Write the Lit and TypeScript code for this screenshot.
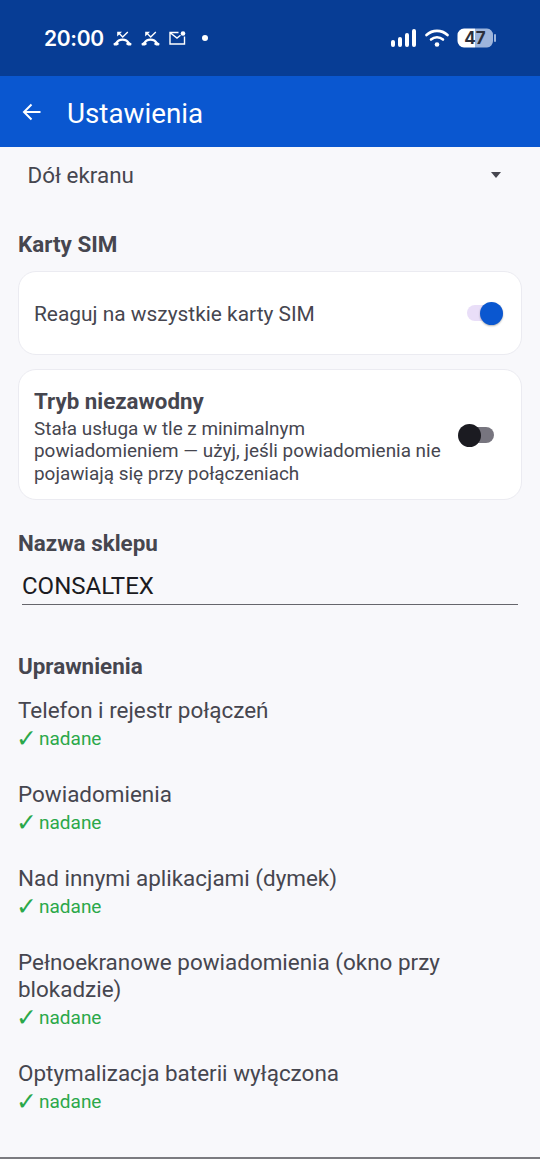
import { LitElement, html, css, svg } from "lit";
import { customElement } from "lit/decorators.js";

const hangup = svg`<path d="M3 12.500C4.500 9.800 7 8.600 9.500 8.600s5 1.200 6.500 3.900" fill="none" stroke="#fff" stroke-width="2.200"/><path d="M.6 12.200 4.800 10.400l1.100 2.900-2 1.300H1.800c-.7 0-1.200-.5-1.200-1.200zM18.400 12.200l-4.200-1.800-1.100 2.900 2 1.300h2.100c.7 0 1.200-.5 1.200-1.200z" fill="#fff"/><path d="M14.800 1 9.700 6 6 2.300" fill="none" stroke="#fff" stroke-width="1.400"/><path d="M4.200 .8H9L4.200 5.600z" fill="#fff"/>`;

@customElement("app-root")
export class AppRoot extends LitElement {
  static styles = css`
    :host { display: block; width: 540px; height: 1159px; overflow: hidden; background: #f8f8fb; font-family: Roboto, "Noto Sans", sans-serif; color: #46464f; }
    .page { height: 1159px; display: flex; flex-direction: column; box-sizing: border-box; border-bottom: 2px solid #7b7b80; }
    .status { height: 76px; flex: none; background: #073d95; display: flex; align-items: center; padding: 0 44px; box-sizing: border-box; color: #fff; justify-content: space-between; }
    .status-left, .status-right { display: flex; align-items: center; }
    .time { font-family: Inter, Roboto, sans-serif; font-weight: 600; font-size: 21px; letter-spacing: -0.3px; margin-right: 9px; }
    .ic { display: block; flex: none; }
    .hang { margin-right: 9px; }
    .mail { margin-right: 16px; }
    .dot { width: 6.500px; height: 6.500px; border-radius: 50%; background: #fff; }
    .wifi { margin: 0 8px 0 9px; }
    .bar { height: 71px; flex: none; background: #0a57d0; display: flex; align-items: center; padding-left: 22px; gap: 25px; color: #fff; font-size: 27.800px; }
    .bar span { padding-top: 3px; }
    .content { flex: 1; padding: 0 18px; display: flex; flex-direction: column; min-height: 0; }
    .select { height: 56px; display: flex; align-items: center; justify-content: space-between; padding: 0 21px 1px 9.500px; box-sizing: border-box; font-size: 22.400px; flex: none; }
    .caret { width: 0; height: 0; border-left: 5.500px solid transparent; border-right: 5.500px solid transparent; border-top: 6px solid #46464f; }
    h2 { margin: 0; font-size: 22.400px; font-weight: 700; line-height: 28px; color: #46464f; }
    .sim-title { margin-top: 27px; }
    .card { background: #fff; border: 1px solid #ebebf1; border-radius: 18px; box-sizing: border-box; display: flex; align-items: center; justify-content: space-between; padding: 0 15px; flex: none; }
    .card1 { height: 84px; margin-top: 13px; font-size: 20.900px; }
    .card1 > span:first-child { padding-top: 2px; }
    .card2 { height: 131px; margin-top: 14px; }
    .card2 .left { margin-top: 3px; }
    .card2 b { display: block; font-size: 22.300px; line-height: 28px; }
    .desc { font-size: 18.900px; line-height: 22.400px; width: 415px; margin-top: 3px; }
    .sw { position: relative; height: 16px; border-radius: 8px; flex: none; }
    .sw i { position: absolute; width: 23px; height: 23px; border-radius: 50%; }
    .on { width: 36px; background: #e9def8; margin-right: 3px; }
    .on i { right: 0; top: -3px; background: #0a57d0; box-shadow: 0 1px 2px rgba(0,0,0,.3); }
    .off { width: 34px; background: #77757f; margin-right: 12px; }
    .off i { left: -2px; top: -3px; background: #1b1b21; }
    .name { margin-top: 29px; }
    .input { margin: 14px 4px 0; height: 33px; border-bottom: 1.500px solid #66666c; font-size: 24px; line-height: 30px; color: #1b1b21; flex: none; }
    .perm-title { margin-top: 47px; }
    .perm { margin-bottom: 28px; flex: none; }
    .perm-title + .perm { margin-top: 17px; }
    .perm .t { font-size: 22.450px; line-height: 27px; }
    .perm .s { font-size: 19px; line-height: 29px; color: #2ba84a; display: flex; align-items: center; }
    .perm .s em { font-style: normal; font-weight: 700; font-family: "DejaVu Sans", sans-serif; font-size: 25px; width: 21px; flex: none; line-height: 29px; margin-left: -2px; margin-right: 2px; }
  `;

  private perm(t: string) {
    return html`<div class="perm"><div class="t">${t}</div><div class="s"><em>✓</em><span>nadane</span></div></div>`;
  }

  render() {
    return html`<div class="page">
      <div class="status">
        <div class="status-left">
          <span class="time">20:00</span>
          <svg class="ic hang" width="19" height="15" viewBox="0 0 19 15">${hangup}</svg>
          <svg class="ic hang" width="19" height="15" viewBox="0 0 19 15">${hangup}</svg>
          <svg class="ic mail" width="17" height="14" viewBox="0 0 17 14"><path d="M9.500 1.500H1v11.500h14.500V5.500M1.500 2l6.500 5 3.500-2.700" fill="none" stroke="#fff" stroke-width="1.400"/><circle cx="14" cy="2.500" r="2.300" fill="#fff"/></svg>
          <span class="dot"></span>
        </div>
        <div class="status-right">
          <svg class="ic" width="25" height="18" viewBox="0 0 25 18"><g fill="#fff"><rect x="0" y="11" width="4" height="7" rx="2"/><rect x="7" y="8" width="4" height="10" rx="2"/><rect x="14" y="4" width="4" height="14" rx="2"/><rect x="21" y="0" width="4" height="18" rx="2"/></g></svg>
          <svg class="ic wifi" width="24" height="18" viewBox="0 0 24 18"><g fill="none" stroke="#fff" stroke-width="2.600" stroke-linecap="round"><path d="M1.500 6C7.500 .5 16.500 .5 22.500 6"/><path d="M6 10.500c3.500-3 8.500-3 12 0"/></g><circle cx="12" cy="15.500" r="2.300" fill="#fff"/></svg>
          <svg class="ic" width="39" height="20" viewBox="0 0 39 20"><path d="M7 .5h11V19.500H7A6.500 6.500 0 0 1 .5 13V7A6.500 6.500 0 0 1 7 .5z" fill="#fff"/><path d="M18 .5h12A6.500 6.500 0 0 1 36 7v6a6.500 6.500 0 0 1-6 6.500H18z" fill="#9db5dc"/><rect x="37" y="6" width="2" height="8" rx="1" fill="#9db5dc"/><text x="18" y="16" text-anchor="middle" font-family="Inter, Roboto, sans-serif" font-weight="700" font-size="17" fill="#2b2f3a">47</text></svg>
        </div>
      </div>
      <div class="bar">
        <svg class="ic" width="20" height="18" viewBox="0 0 20 18"><path d="M18.500 9H2M9.500 1.500 2 9l7.500 7.500" fill="none" stroke="#fff" stroke-width="2"/></svg>
        <span>Ustawienia</span>
      </div>
      <div class="content">
        <div class="select"><span>Dół ekranu</span><span class="caret"></span></div>
        <h2 class="sim-title">Karty SIM</h2>
        <div class="card card1"><span>Reaguj na wszystkie karty SIM</span><span class="sw on"><i></i></span></div>
        <div class="card card2">
          <div class="left"><b>Tryb niezawodny</b><div class="desc">Stała usługa w tle z minimalnym powiadomieniem — użyj, jeśli powiadomienia nie pojawiają się przy połączeniach</div></div>
          <span class="sw off"><i></i></span>
        </div>
        <h2 class="name">Nazwa sklepu</h2>
        <div class="input">CONSALTEX</div>
        <h2 class="perm-title">Uprawnienia</h2>
        ${this.perm("Telefon i rejestr połączeń")}
        ${this.perm("Powiadomienia")}
        ${this.perm("Nad innymi aplikacjami (dymek)")}
        ${this.perm("Pełnoekranowe powiadomienia (okno przy blokadzie)")}
        ${this.perm("Optymalizacja baterii wyłączona")}
      </div>
    </div>`;
  }
}
